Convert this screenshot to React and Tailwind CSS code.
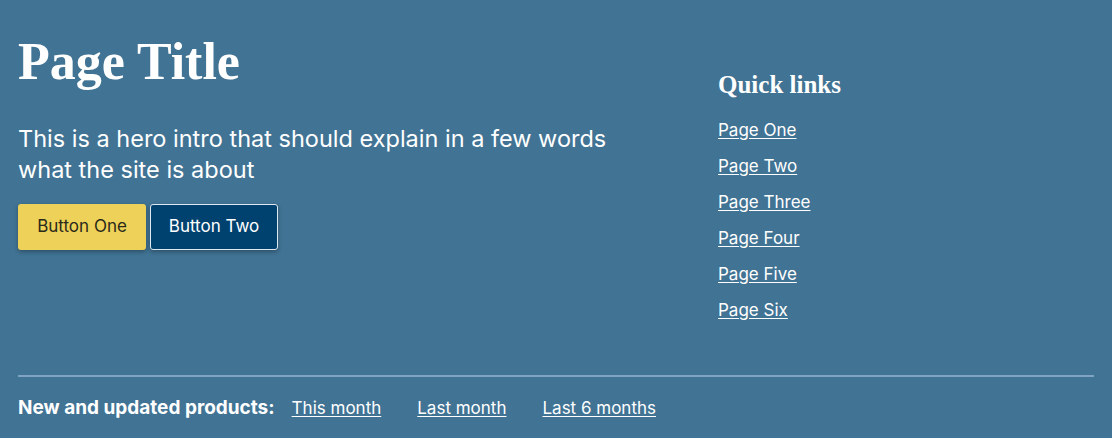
const quickLinks = ["Page One", "Page Two", "Page Three", "Page Four", "Page Five", "Page Six"];

const periods = ["This month", "Last month", "Last 6 months"];

const App = () => {
  return (
    <main className="min-h-screen w-full bg-[#417394] text-white px-[18px] font-['Inter',sans-serif]">
      <section className="flex pt-[30px]">
        <div className="w-[700px] shrink-0">
          <h1 className="font-['Liberation_Serif',serif] font-bold text-[52px] leading-[64px]">
            Page Title
          </h1>
          <p className="mt-[29px] text-[23.5px] leading-[31px] max-w-[640px]">
            This is a hero intro that should explain in a few words what the site is about
          </p>
          <div className="flex gap-1 mt-[19px]">
            <button className="w-[128px] h-[46px] rounded-[3px] bg-[#edd158] text-[#2a2a1a] text-[17px] shadow-[0_2px_4px_rgba(0,0,0,0.3)]">
              Button One
            </button>
            <button className="w-[128px] h-[46px] rounded-[3px] bg-[#00426f] border border-[#dfe8f0] text-white text-[17px] shadow-[0_2px_4px_rgba(0,0,0,0.3)]">
              Button Two
            </button>
          </div>
        </div>
        <nav className="pt-[39px]">
          <h2 className="font-['Liberation_Serif',serif] font-bold text-[25px] leading-[32px]">
            Quick links
          </h2>
          <ul className="mt-[17px] flex flex-col gap-[12px]">
            {quickLinks.map((l) => (
              <li key={l} className="text-[17px] leading-[24px]">
                <a href="#" className="underline underline-offset-2">
                  {l}
                </a>
              </li>
            ))}
          </ul>
        </nav>
      </section>
      <footer className="mt-[53px] border-t-2 border-[#7fa4c1] pt-[19px] pb-[20px] flex items-center leading-[24px]">
        <span className="font-bold text-[19px] mr-[17px]">New and updated products:</span>
        <div className="flex gap-[36px] text-[17px]">
          {periods.map((p) => (
            <a key={p} href="#" className="underline underline-offset-2">
              {p}
            </a>
          ))}
        </div>
      </footer>
    </main>
  );
};

export default App;
